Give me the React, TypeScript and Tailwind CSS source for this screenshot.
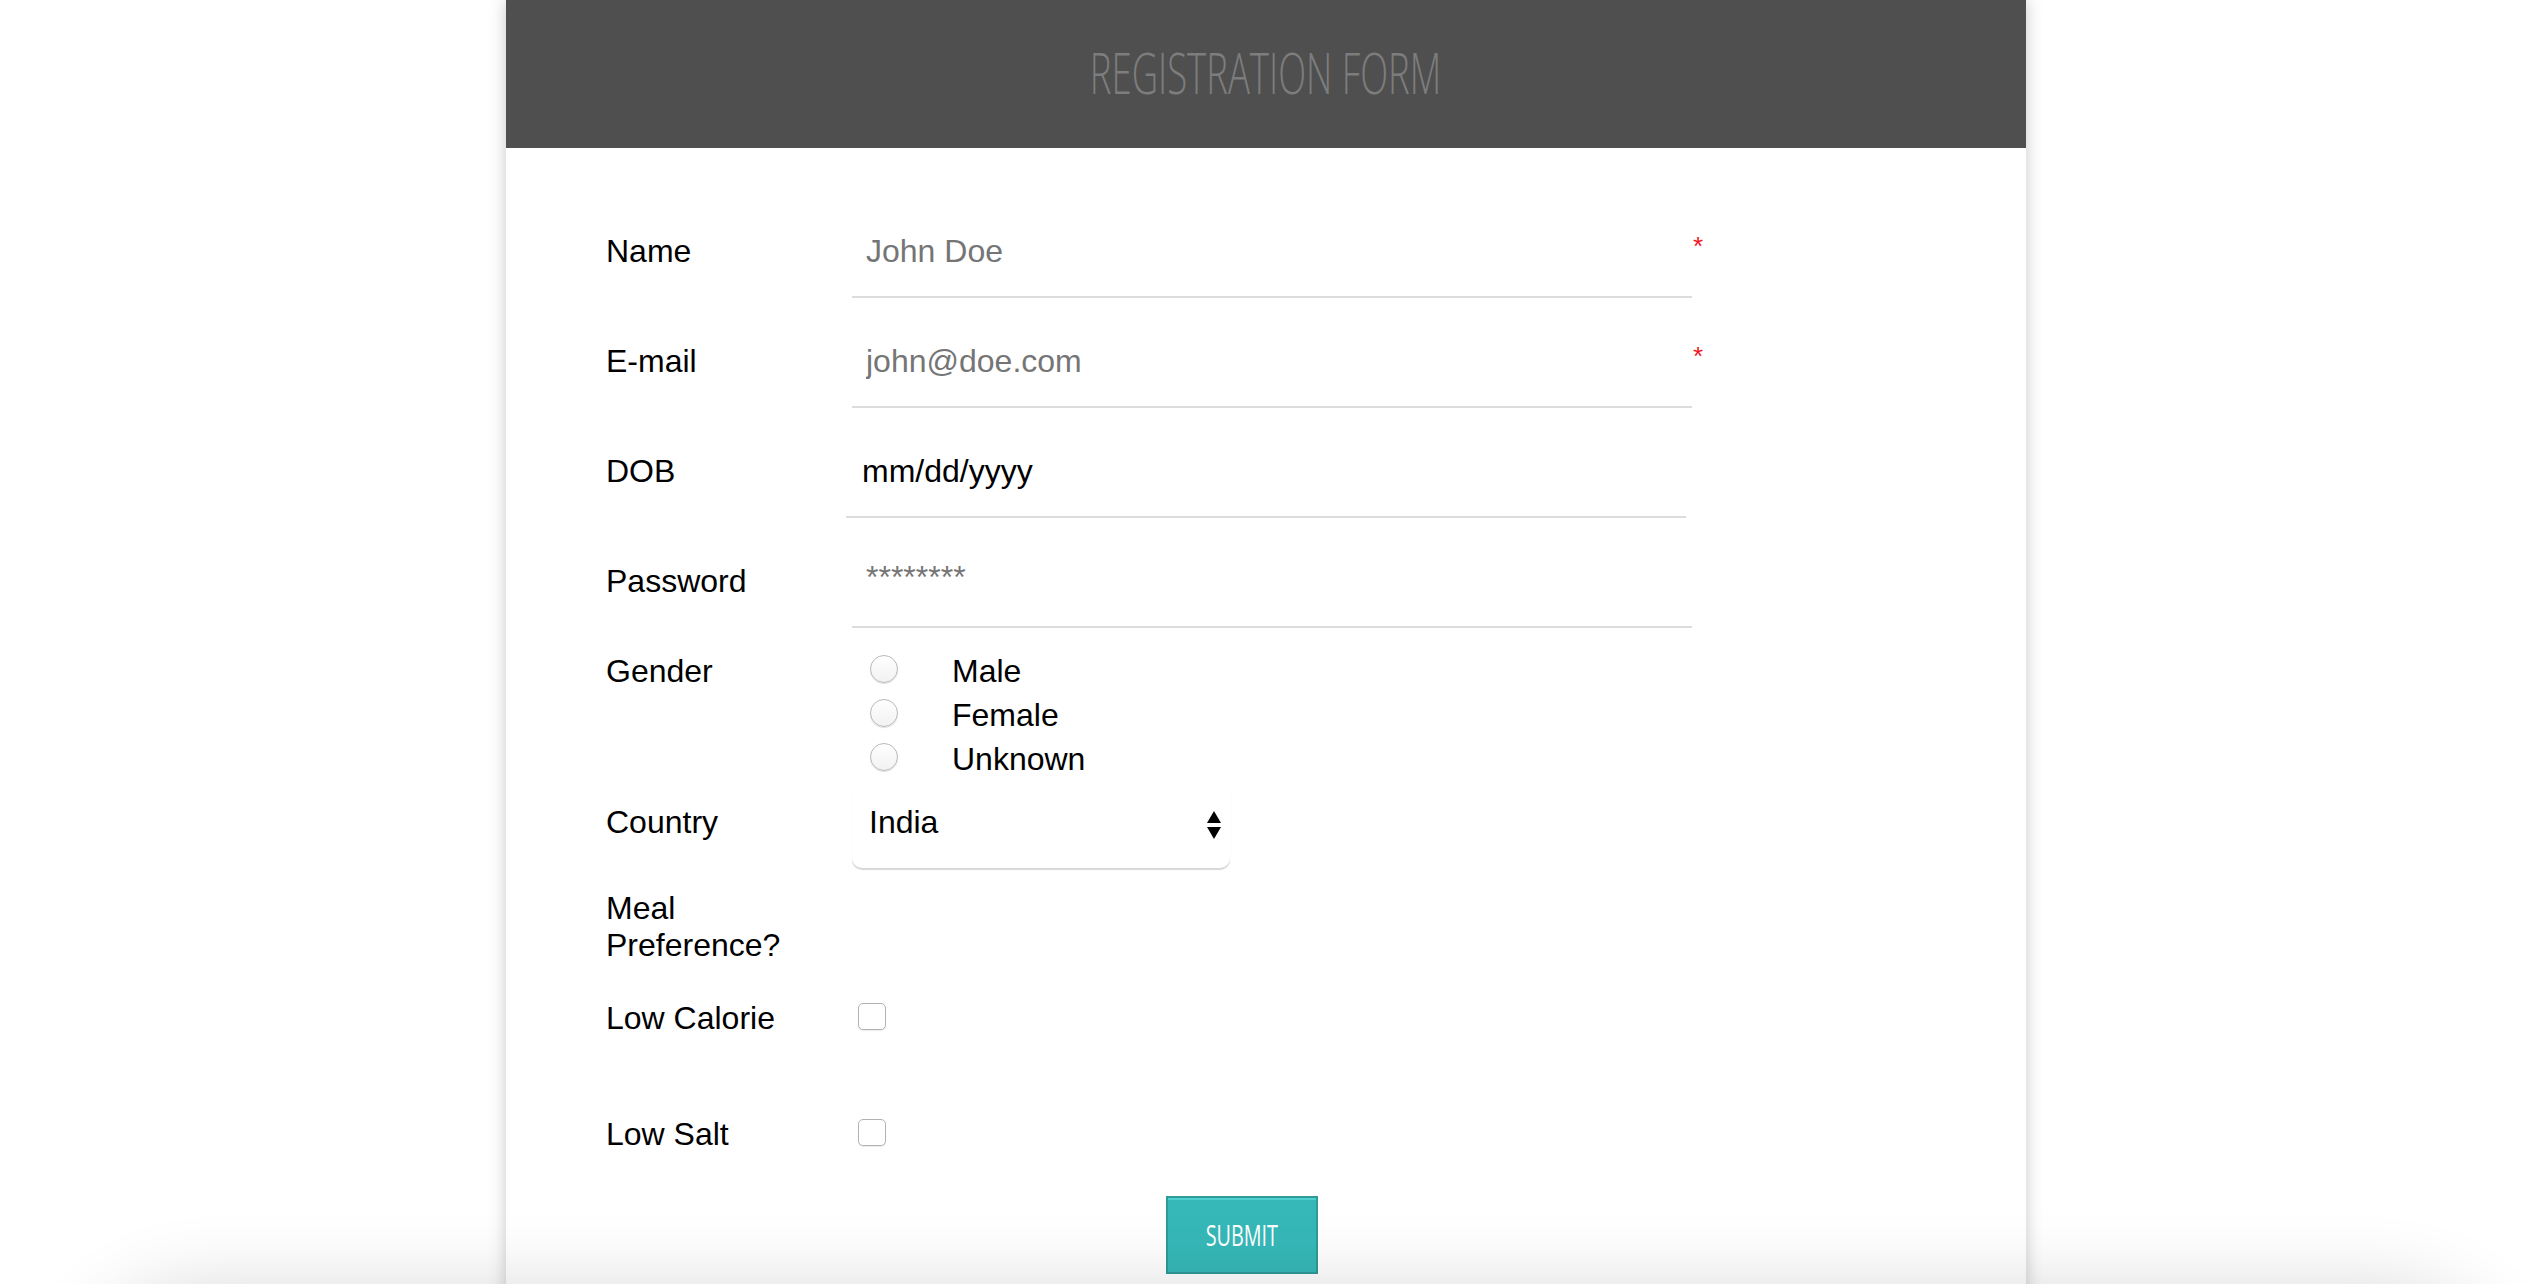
import type { ReactNode } from 'react';

const TEXT_FIELDS: {
  id: string;
  label: string;
  type: string;
  placeholder: string;
  required?: boolean;
}[] = [
  { id: 'name', label: 'Name', type: 'text', placeholder: 'John Doe', required: true },
  { id: 'email', label: 'E-mail', type: 'email', placeholder: 'john@doe.com', required: true },
];

const GENDERS = ['Male', 'Female', 'Unknown'];

const label = 'w-[210px] mr-[36px] shrink-0 text-[32px] leading-[37px] text-black';
const inputText =
  'block w-full h-[37px] bg-transparent text-[32px] leading-[37px] text-black outline-none placeholder:text-[#757575]';

function Row({ children, className = '' }: { children: ReactNode; className?: string }) {
  return <div className={`flex items-start ${className}`}>{children}</div>;
}

function Asterisk() {
  return <span className="ml-[1px] text-[26px] leading-[26px] text-[#f5121f]">*</span>;
}

function Checkbox({ id }: { id: string }) {
  return (
    <input
      id={id}
      type="checkbox"
      className="mt-[3px] ml-[6px] h-[27px] w-[28px] appearance-none rounded-[5px] border border-[#b3b3b3] bg-white shadow-[0_1px_1px_rgba(0,0,0,0.08)]"
    />
  );
}

export default function App() {
  return (
    <div className="relative h-[1284px] overflow-hidden bg-white font-['Liberation_Sans',Arial,sans-serif]">
      <div className="ml-[506px] min-h-[1340px] w-[1520px] bg-white shadow-[0_0_16px_rgba(0,0,0,0.22)]">
        <header className="flex h-[148px] items-center justify-center bg-[#4f4f4f] pb-[4px]">
          <h1 className="inline-block scale-x-[0.64] font-['Open_Sans',sans-serif] text-[57px] leading-none font-light whitespace-nowrap text-[#7d7d7d]">
            REGISTRATION FORM
          </h1>
        </header>

        <form className="pt-[85px] pl-[100px]" onSubmit={(e) => e.preventDefault()}>
          {TEXT_FIELDS.map((f, i) => (
            <Row key={f.id} className={i > 0 ? 'mt-[45px]' : ''}>
              <label htmlFor={f.id} className={label}>
                {f.label}
              </label>
              <div className="w-[840px] border-b-2 border-[#dcdcdc] pb-[26px] pl-[14px]">
                <input id={f.id} type={f.type} placeholder={f.placeholder} className={inputText} />
              </div>
              {f.required && <Asterisk />}
            </Row>
          ))}

          <Row className="mt-[45px]">
            <label htmlFor="dob" className={label}>
              DOB
            </label>
            <div
              id="dob"
              className="-ml-[6px] w-[840px] border-b-2 border-[#dcdcdc] pb-[26px] pl-[16px] text-[32px] leading-[37px] text-black"
            >
              mm/dd/yyyy
            </div>
          </Row>

          <Row className="mt-[45px]">
            <label htmlFor="password" className={label}>
              Password
            </label>
            <div className="w-[840px] border-b-2 border-[#dcdcdc] pb-[34px] pl-[14px]">
              <input
                id="password"
                type="password"
                placeholder="********"
                className="block h-[29px] w-full bg-transparent text-[32px] leading-[29px] text-black outline-none placeholder:text-[#757575]"
              />
            </div>
          </Row>

          <Row className="mt-[21px]">
            <span className={`${label} flex h-[44px] items-center`}>Gender</span>
            <div className="flex flex-col">
              {GENDERS.map((g) => (
                <label key={g} className="flex h-[44px] items-center">
                  <input
                    type="radio"
                    name="gender"
                    className="mb-[4px] ml-[18px] h-[28px] w-[28px] appearance-none rounded-full border border-[#b9b9b9] bg-linear-to-b from-white to-[#f2f2f2] shadow-[0_1px_1px_rgba(0,0,0,0.12)]"
                  />
                  <span className="ml-[54px] text-[32px] leading-[37px] text-black">{g}</span>
                </label>
              ))}
            </div>
          </Row>

          <Row className="mt-[9px]">
            <span className={`${label} pt-[14px]`}>Country</span>
            <div className="flex h-[78px] w-[378px] items-start justify-between rounded-b-[10px] bg-white pt-[14px] pr-[8px] pl-[17px] shadow-[0_1.5px_1px_rgba(0,0,0,0.16)]">
              <span className="text-[32px] leading-[37px] text-black">India</span>
              <svg width="16" height="29" viewBox="0 0 16 29" className="mt-[7px]" fill="#000">
                <path d="M8 0 L15 12 H1 Z" />
                <path d="M1 16 H15 L8 28 Z" />
              </svg>
            </div>
          </Row>

          <Row className="mt-[22px]">
            <span className={label}>Meal Preference?</span>
          </Row>

          <Row className="mt-[36px]">
            <label htmlFor="lowcal" className={label}>
              Low Calorie
            </label>
            <Checkbox id="lowcal" />
          </Row>

          <Row className="mt-[79px]">
            <label htmlFor="lowsalt" className={label}>
              Low Salt
            </label>
            <Checkbox id="lowsalt" />
          </Row>

          <div className="mt-[43px] flex w-[1272px] justify-center">
            <button
              type="submit"
              className="flex h-[78px] w-[152px] items-center justify-center border-2 border-[#2f9a98] bg-[#36b8b8] shadow-[inset_0_2px_0_#4fd0cf]"
            >
              <span className="inline-block scale-x-[0.66] font-['Open_Sans',sans-serif] text-[30px] leading-none whitespace-nowrap text-white">
                SUBMIT
              </span>
            </button>
          </div>
        </form>
      </div>

      <div className="pointer-events-none absolute top-[1310px] right-[60px] left-[100px] z-10 h-[200px] rounded-[100px] shadow-[0_0_80px_20px_rgba(0,0,0,0.16)]" />
    </div>
  );
}
